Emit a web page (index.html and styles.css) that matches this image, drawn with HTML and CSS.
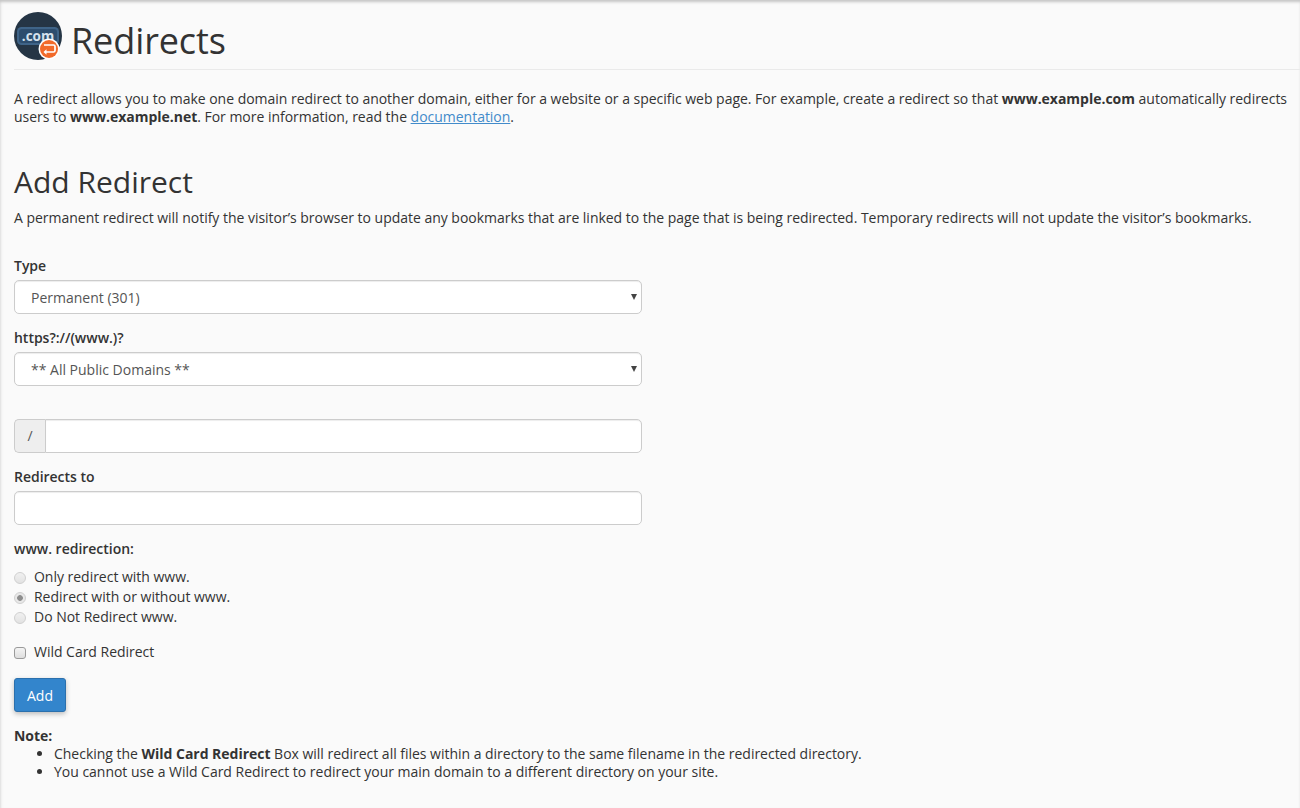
FILE: index.html
```html
<!DOCTYPE html>
<html lang="en">
<head>
<meta charset="utf-8">
<title>Redirects</title>
<link rel="stylesheet" href="styles.css">
</head>
<body>
<main class="page">
  <header class="page-header">
    <svg class="logo" width="48" height="48" viewBox="0 0 48 48" aria-hidden="true">
      <circle cx="24" cy="24" r="24" fill="#253545"/>
      <rect x="3" y="15" width="42" height="18" rx="4.5" fill="#3f6488"/>
      <rect x="5" y="17" width="38" height="14" rx="3" fill="#2d4d6e"/>
      <text x="24" y="28.5" class="logo-text" text-anchor="middle">.com</text>
      <circle cx="35" cy="37" r="10.5" fill="#fff"/>
      <circle cx="35" cy="37" r="9" fill="#f26a2a"/>
      <path d="M30 33h9.5a1.5 1.5 0 0 1 1.5 1.5v4a1.5 1.5 0 0 1-1.5 1.5H32" fill="none" stroke="#fff" stroke-width="1.7"/>
      <path d="M32.5 37.3l-3 2.7 3 2.7z" fill="#fff"/>
    </svg>
    <h1 class="page-title">Redirects</h1>
  </header>

  <p class="intro">A redirect allows you to make one domain redirect to another domain, either for a website or a specific web page. For example, create a redirect so that <b>www.example.com</b> automatically redirects users to <b>www.example.net</b>. For more information, read the <a href="#">documentation</a>.</p>

  <h2 class="section-title">Add Redirect</h2>
  <p class="section-text">A permanent redirect will notify the visitor’s browser to update any bookmarks that are linked to the page that is being redirected. Temporary redirects will not update the visitor’s bookmarks.</p>

  <form class="form">
    <div class="field">
      <label class="label" for="type">Type</label>
      <div class="select-wrap"><select class="control select" id="type"><option>Permanent (301)</option></select></div>
    </div>
    <div class="field">
      <label class="label" for="domain">https?://(www.)?</label>
      <div class="select-wrap"><select class="control select" id="domain"><option>** All Public Domains **</option></select></div>
    </div>
    <div class="field field-path">
      <div class="input-group">
        <span class="addon">/</span>
        <input class="control control-grouped" type="text" aria-label="Path">
      </div>
    </div>
    <div class="field">
      <label class="label" for="target">Redirects to</label>
      <input class="control" id="target" type="text">
    </div>
    <div class="label www-label">www. redirection:</div>
    <div class="radios">
      <label class="option"><input class="radio" type="radio" name="www"><span>Only redirect with www.</span></label>
      <label class="option"><input class="radio" type="radio" name="www" checked><span>Redirect with or without www.</span></label>
      <label class="option"><input class="radio" type="radio" name="www"><span>Do Not Redirect www.</span></label>
    </div>
    <label class="option wild"><input class="check" type="checkbox"><span>Wild Card Redirect</span></label>
    <button class="btn" type="button">Add</button>
  </form>

  <div class="note">
    <b>Note:</b>
    <ul class="note-list">
      <li>Checking the <b>Wild Card Redirect</b> Box will redirect all files within a directory to the same filename in the redirected directory.</li>
      <li>You cannot use a Wild Card Redirect to redirect your main domain to a different directory on your site.</li>
    </ul>
  </div>
</main>
</body>
</html>
```
FILE: styles.css
```css
* { box-sizing: border-box; }
html, body { height: 100%; }
body {
  margin: 0;
  background: #fafafa;
  color: #333;
  font: 14px/18px "Open Sans", sans-serif;
  letter-spacing: -0.02px;
  overflow: hidden;
  box-shadow: inset 0 3px 3px -1px #c4c4c4, inset 3px 0 3px -2px #e4e4e4;
}
.page { padding: 12px 0 0 14px; }
.page-header {
  display: flex;
  align-items: flex-start;
  gap: 9px;
  height: 58px;
  border-bottom: 1px solid #eaeaea;
}
.logo { flex: none; }
.logo-text { font: 700 13.5px "Open Sans", sans-serif; fill: #d5e1ec; }
.page-title { margin: 5px 0 0; font-size: 36px; line-height: 48px; font-weight: 400; letter-spacing: -0.1px; color: #333; }
.intro { margin: 20px 0 0; }
.intro a { color: #428bca; text-decoration: underline; }
.section-title { margin: 38px 0 0; font-size: 30px; line-height: 36px; font-weight: 400; letter-spacing: 0; }
.section-text { margin: 9px 0 0; }
.form { margin-top: 29px; width: 628px; }
.field { margin-bottom: 14px; }
.field-path { padding-top: 19px; }
.label { display: block; margin-bottom: 4px; font-weight: 600; line-height: 20px; }
.control {
  display: block;
  width: 100%;
  height: 34px;
  padding: 6px 12px;
  background: #fff;
  border: 1px solid #ccc;
  border-radius: 5px;
  color: #555;
  font: 14px/20px "Open Sans", sans-serif;
  box-shadow: inset 0 1px 1px rgba(0,0,0,.075);
}
.select-wrap { position: relative; }
.select-wrap::after {
  content: "";
  position: absolute;
  top: 14px;
  right: 5px;
  border: 3px solid transparent;
  border-top: 6px solid #444;
  border-bottom: 0;
  pointer-events: none;
}
.select { appearance: none; padding: 7px 12px 5px 16px; }
.input-group { display: flex; }
.addon {
  flex: none;
  width: 31px;
  height: 34px;
  background: #eee;
  border: 1px solid #ccc;
  border-right: 0;
  border-radius: 5px 0 0 5px;
  color: #555;
  text-align: center;
  line-height: 32px;
}
.control-grouped { flex: 1; width: auto; border-radius: 0 5px 5px 0; }
.www-label { margin: 14px 0 0; }
.radios { margin-top: 8px; }
.option { display: flex; align-items: center; gap: 8px; height: 20px; line-height: 20px; }
.radio, .check {
  appearance: none;
  flex: none;
  width: 12px;
  height: 12px;
  margin: 2px 0 0;
  background: linear-gradient(#f0f0f0, #e2e2e2);
  border: 1px solid #d0d0d0;
}
.radio { border-radius: 50%; }
.radio:checked { background: radial-gradient(circle, #8e8e8e 0 2.5px, #e8e8e8 3.2px); }
.check { border: 1px solid #9a9a9a; border-radius: 3px; background: linear-gradient(#f4f4f4, #dedede); }
.wild { margin-top: 15px; }
.btn {
  display: block;
  width: 52px;
  height: 34px;
  margin-top: 16px;
  padding: 0;
  background: #3385cc;
  border: 1px solid #2b70ad;
  border-radius: 3px;
  color: #fff;
  font: 14px "Open Sans", sans-serif;
  box-shadow: 0 2px 5px rgba(0,0,0,.25);
}
.note { margin-top: 15px; }
.note-list { margin: 0; padding-left: 40px; }
```
